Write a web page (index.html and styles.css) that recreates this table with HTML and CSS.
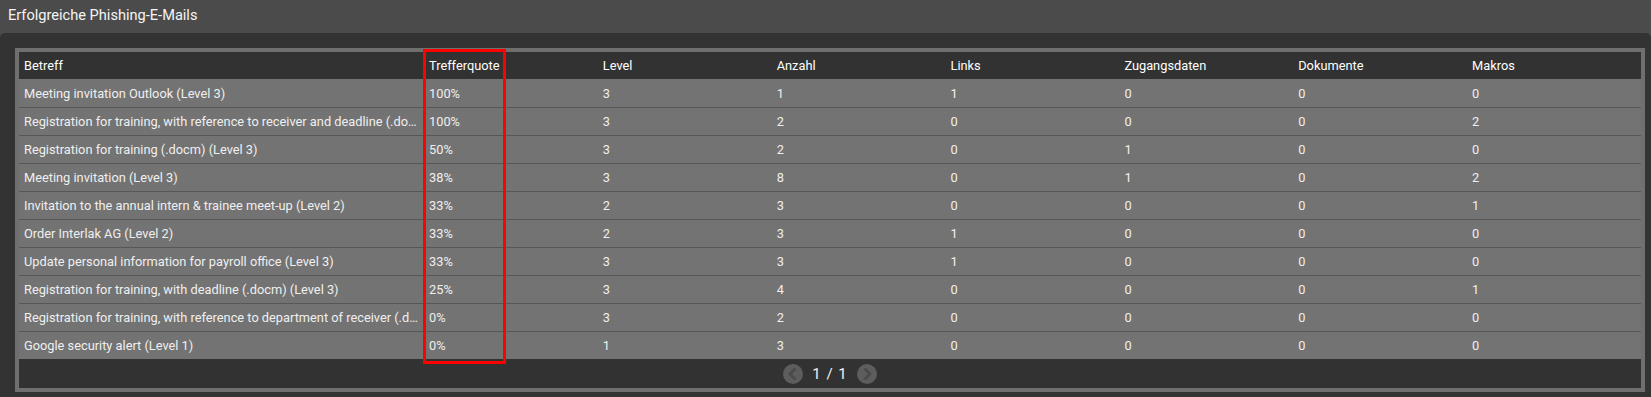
FILE: index.html
```html
<!DOCTYPE html>
<html lang="de">
<head>
<meta charset="utf-8">
<title>Erfolgreiche Phishing-E-Mails</title>
<link rel="stylesheet" href="styles.css">
</head>
<body>
<div class="widget">
  <div class="titlebar">Erfolgreiche Phishing-E-Mails</div>
  <div class="panel">
    <div class="tablewrap">
      <table class="grid">
        <colgroup>
          <col class="c-subject"><col><col><col><col><col><col><col>
        </colgroup>
        <thead>
          <tr><th>Betreff</th><th>Trefferquote</th><th>Level</th><th>Anzahl</th><th>Links</th><th>Zugangsdaten</th><th>Dokumente</th><th>Makros</th></tr>
        </thead>
        <tbody>
          <tr><td>Meeting invitation Outlook (Level 3)</td><td>100%</td><td>3</td><td>1</td><td>1</td><td>0</td><td>0</td><td>0</td></tr>
          <tr><td>Registration for training, with reference to receiver and deadline (.docm) (Level 3)</td><td>100%</td><td>3</td><td>2</td><td>0</td><td>0</td><td>0</td><td>2</td></tr>
          <tr><td>Registration for training (.docm) (Level 3)</td><td>50%</td><td>3</td><td>2</td><td>0</td><td>1</td><td>0</td><td>0</td></tr>
          <tr><td>Meeting invitation (Level 3)</td><td>38%</td><td>3</td><td>8</td><td>0</td><td>1</td><td>0</td><td>2</td></tr>
          <tr><td>Invitation to the annual intern &amp; trainee meet-up (Level 2)</td><td>33%</td><td>2</td><td>3</td><td>0</td><td>0</td><td>0</td><td>1</td></tr>
          <tr><td>Order Interlak AG (Level 2)</td><td>33%</td><td>2</td><td>3</td><td>1</td><td>0</td><td>0</td><td>0</td></tr>
          <tr><td>Update personal information for payroll office (Level 3)</td><td>33%</td><td>3</td><td>3</td><td>1</td><td>0</td><td>0</td><td>0</td></tr>
          <tr><td>Registration for training, with deadline (.docm) (Level 3)</td><td>25%</td><td>3</td><td>4</td><td>0</td><td>0</td><td>0</td><td>1</td></tr>
          <tr><td>Registration for training, with reference to department of receiver (.docm) (Level 3)</td><td>0%</td><td>3</td><td>2</td><td>0</td><td>0</td><td>0</td><td>0</td></tr>
          <tr><td>Google security alert (Level 1)</td><td>0%</td><td>1</td><td>3</td><td>0</td><td>0</td><td>0</td><td>0</td></tr>
        </tbody>
      </table>
      <div class="pager">
        <span class="pbtn"><svg width="20" height="20" viewBox="0 0 20 20"><path d="M11.5 5.5 L7 10 L11.5 14.5" fill="none" stroke="#4b4b4b" stroke-width="3" stroke-linecap="round" stroke-linejoin="round"/></svg></span>
        <span class="ptext">1 / 1</span>
        <span class="pbtn"><svg width="20" height="20" viewBox="0 0 20 20"><path d="M8.5 5.5 L13 10 L8.5 14.5" fill="none" stroke="#4b4b4b" stroke-width="3" stroke-linecap="round" stroke-linejoin="round"/></svg></span>
      </div>
      <div class="highlight"></div>
    </div>
  </div>
</div>
</body>
</html>
```
FILE: styles.css
```css
html, body {
  margin: 0;
  padding: 0;
  background: #4b4b4b;
}
body {
  font-family: Roboto, "Liberation Sans", sans-serif;
  color: #f0f0f0;
  width: 1651px;
  height: 397px;
  overflow: hidden;
}
.widget {
  display: flex;
  flex-direction: column;
  height: 397px;
}
.titlebar {
  height: 33px;
  box-sizing: border-box;
  padding: 6px 0 0 8px;
  font-size: 14.6px;
  line-height: 18px;
  color: #f4f4f4;
  background: #4b4b4b;
}
.panel {
  flex: 1;
  background: #333333;
  border-radius: 5px 5px 0 0;
  padding: 15px 6px 5px 15px;
  display: flex;
}
.tablewrap {
  position: relative;
  flex: 1;
  background: #6f6f6f;
  padding: 4px 4px 4px 4px;
  display: flex;
  flex-direction: column;
}
.grid {
  width: 100%;
  table-layout: fixed;
  border-collapse: collapse;
  font-size: 12.8px;
}
.c-subject { width: 405px; }
.grid th, .grid td {
  text-align: left;
  font-weight: normal;
  padding: 0 5px;
  white-space: nowrap;
  overflow: hidden;
  text-overflow: ellipsis;
}
.grid th {
  height: 27px;
  background: #323232;
  color: #ffffff;
}
.grid td {
  height: 27px;
  background: #737373;
  color: #efefef;
  border-top: 1px solid #575757;
}
.grid tbody tr:first-child td {
  border-top: none;
  height: 28px;
}
.grid td:first-child {
  padding-right: 6px;
}
.pager {
  flex: 1;
  background: #323232;
  display: flex;
  align-items: center;
  justify-content: center;
  gap: 9px;
}
.pbtn {
  width: 20px;
  height: 20px;
  border-radius: 50%;
  background: #5d5d5d;
  display: flex;
}
.ptext {
  font-size: 15px;
  color: #f2f2f2;
  letter-spacing: 1px;
}
.highlight {
  position: absolute;
  left: 408px;
  top: 1px;
  width: 77px;
  height: 309px;
  border: 3px solid #ff0000;
}
```
